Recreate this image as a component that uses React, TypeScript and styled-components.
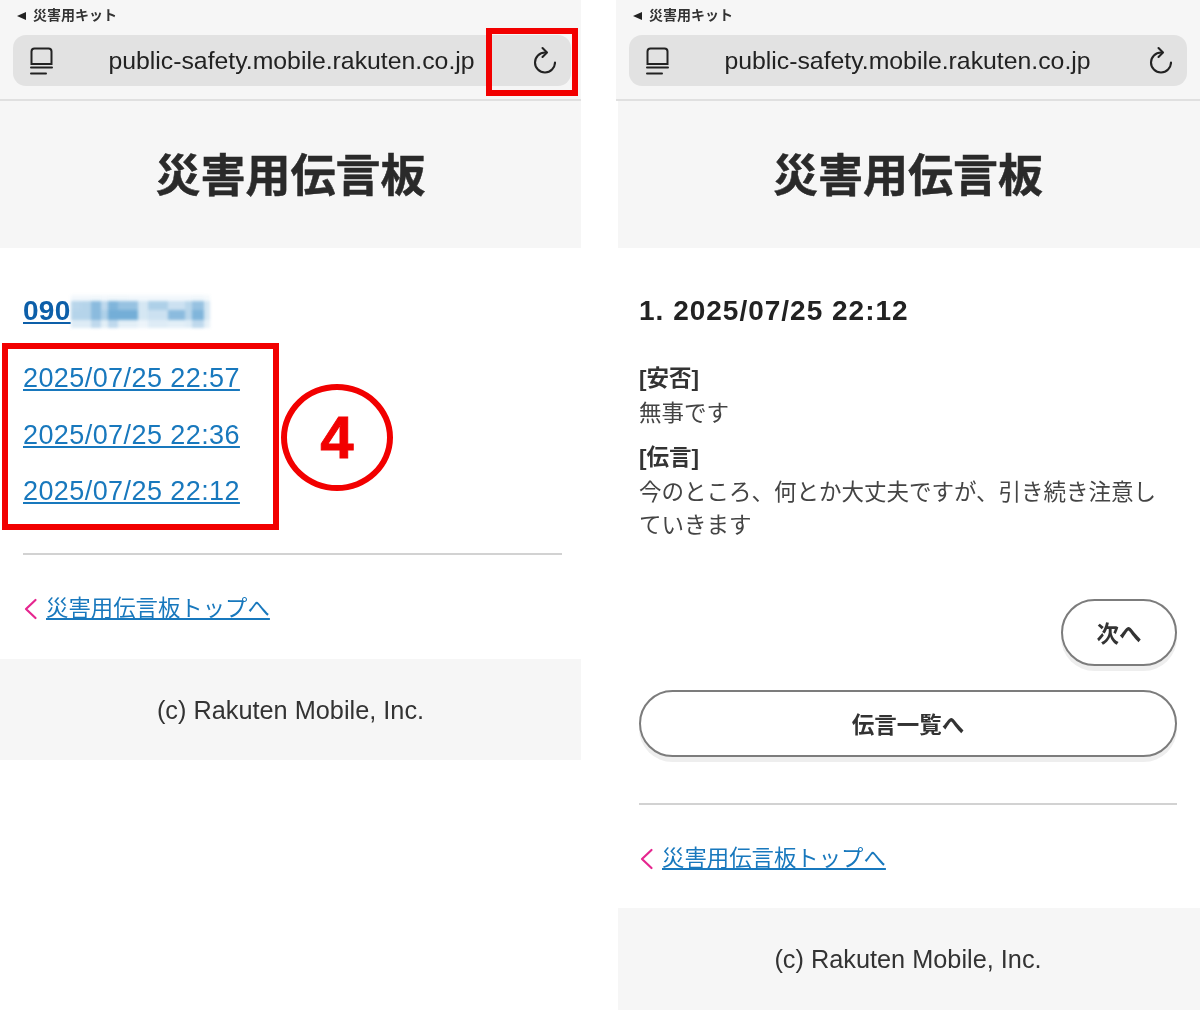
import React from "react";
import styled, { createGlobalStyle } from "styled-components";

const Global = createGlobalStyle`
  html, body { margin: 0; padding: 0; background: #fff; }
  body { font-family: "Liberation Sans", "Noto Sans CJK JP", sans-serif; }
  * { box-sizing: border-box; }
`;

const Page = styled.div`
  width: 1200px;
  height: 1023px;
  display: flex;
  gap: 35px;
  overflow: hidden;
  background: #fff;
  filter: blur(0.4px);
`;

const Phone = styled.section<{ $width: number }>`
  position: relative;
  flex: 0 0 ${(p) => p.$width}px;
  width: ${(p) => p.$width}px;
`;

const Toolbar = styled.div`
  height: 101px;
  padding-top: 6px;
  background: #f6f6f6;
  border-bottom: 2px solid #e0e0e0;
`;

const BackCrumb = styled.div`
  height: 19px;
  margin-left: 17px;
  display: flex;
  align-items: center;
  gap: 7px;
  font-size: 14px;
  line-height: 19px;
  font-weight: 700;
  color: #333;
`;

const CrumbArrow = styled.span`
  width: 0;
  height: 0;
  border-top: 4.5px solid transparent;
  border-bottom: 4.5px solid transparent;
  border-right: 9px solid #222;
`;

const AddressBar = styled.div`
  width: 558px;
  height: 51px;
  margin: 10px 0 0 13px;
  padding: 0 15px 0 14px;
  display: grid;
  grid-template-columns: 1fr auto 1fr;
  align-items: center;
  background: #e2e2e2;
  border-radius: 13px;
`;

const Url = styled.div`
  font-size: 24.8px;
  color: #222;
  white-space: nowrap;
`;

const ReloadWrap = styled.div`
  justify-self: end;
  display: flex;
`;

const Header = styled.header<{ $inset?: number }>`
  height: 147px;
  padding: 4px ${(p) => p.$inset ?? 0}px 0 0;
  margin-left: ${(p) => p.$inset ?? 0}px;
  background: #f6f6f6;
  display: flex;
  align-items: center;
  justify-content: center;
`;

const Title = styled.h1`
  margin: 0;
  font-size: 45px;
  line-height: 54px;
  font-weight: 700;
  color: #2a2a2a;
  -webkit-text-stroke: 0.5px #2a2a2a;
`;

const Main = styled.main<{ $right: number }>`
  padding: 43px ${(p) => p.$right}px 0 23px;
`;

const PhoneLink = styled.div`
  display: flex;
  align-items: center;
  height: 40px;
`;

const PhoneNumber = styled.a`
  font-size: 28px;
  line-height: 34px;
  font-weight: 700;
  color: #0d5fa9;
  text-decoration: underline;
  letter-spacing: 0.3px;
`;

const Mosaic = styled.svg`
  display: block;
  filter: blur(1.8px);
`;

const DateList = styled.div`
  margin-top: 27px;
  display: flex;
  flex-direction: column;
  gap: 16.5px;
`;

const DateLink = styled.a`
  height: 40px;
  font-size: 27px;
  line-height: 40px;
  color: #1878bd;
  text-decoration: underline;
  letter-spacing: 0.42px;
`;

const Rule = styled.hr<{ $top: number }>`
  height: 2px;
  margin: ${(p) => p.$top}px 0 0;
  border: 0;
  background: #d2d2d2;
`;

const BackRow = styled.div<{ $top: number }>`
  margin-top: ${(p) => p.$top}px;
  height: 34px;
  display: flex;
  align-items: center;
  gap: 8px;
`;

const BackLink = styled.a`
  font-size: 22.4px;
  line-height: 34px;
  color: #1878bd;
  text-decoration: underline;
`;

const Footer = styled.footer<{ $top: number; $inset?: number; $height: number }>`
  height: ${(p) => p.$height}px;
  margin-top: ${(p) => p.$top}px;
  margin-left: ${(p) => p.$inset ?? 0}px;
  padding: 2px ${(p) => p.$inset ?? 0}px 0 0;
  background: #f6f6f6;
  display: flex;
  align-items: center;
  justify-content: center;
  font-size: 25.3px;
  color: #333;
`;

const EntryTitle = styled.div`
  height: 40px;
  font-size: 28px;
  line-height: 40px;
  font-weight: 700;
  color: #222;
  letter-spacing: 1px;
`;

const Block = styled.div<{ $top: number }>`
  margin-top: ${(p) => p.$top}px;
`;

const Label = styled.div`
  font-size: 22.5px;
  line-height: 33px;
  font-weight: 700;
  color: #333;
`;

const Body = styled.div`
  padding-top: 1.5px;
  font-size: 22.5px;
  line-height: 33px;
  color: #444;
`;

const ButtonRow = styled.div`
  margin-top: 57px;
  display: flex;
  justify-content: flex-end;
`;

const PillButton = styled.button<{ $wide?: boolean }>`
  display: block;
  width: ${(p) => (p.$wide ? "100%" : "116px")};
  height: 67px;
  margin-top: ${(p) => (p.$wide ? "24px" : "0")};
  padding: 0;
  border: 2px solid #7c7c7c;
  border-radius: 34px;
  background: #fff;
  box-shadow: 0 5px 0 #eeeeee;
  font-family: inherit;
  font-size: 22.5px;
  font-weight: 700;
  color: #333;
`;

const RedBox = styled.div<{ $x: number; $y: number; $w: number; $h: number }>`
  position: absolute;
  left: ${(p) => p.$x}px;
  top: ${(p) => p.$y}px;
  width: ${(p) => p.$w}px;
  height: ${(p) => p.$h}px;
  border: 6px solid #f20000;
`;

const StepCircle = styled.div`
  position: absolute;
  left: 281px;
  top: 384px;
  width: 112px;
  height: 107px;
  display: flex;
  align-items: center;
  justify-content: center;
  border: 6px solid #f20000;
  border-radius: 50%;
  font-size: 60px;
  font-weight: 700;
  color: #f20000;
  -webkit-text-stroke: 0.8px #f20000;
`;

const TabsIcon = () => (
  <svg width="26" height="30" viewBox="0 0 26 30" fill="none" stroke="#222" strokeWidth="2" strokeLinecap="round">
    <path d="M4.5 18V5.5Q4.5 2.5 7.5 2.5H21.5Q24.5 2.5 24.5 5.5V18Z" />
    <path d="M4 21.5H25" />
    <path d="M4 27.5H19" />
  </svg>
);

const ReloadIcon = () => (
  <svg width="24" height="30" viewBox="0 0 24 30" fill="none" stroke="#222" strokeWidth="2.1" strokeLinecap="round" strokeLinejoin="round">
    <path d="M13 6.5A10 10 0 1 0 23 16.5" />
    <path d="M10.5 2L15 6.5L10.5 11" />
  </svg>
);

const Chevron = () => (
  <svg width="15" height="22" viewBox="0 0 15 22" fill="none" stroke="#e5268f" strokeWidth="2.2" strokeLinecap="round" strokeLinejoin="round">
    <path d="M12.5 2L3 11L12.5 20" />
  </svg>
);

const mosaicCols = [10, 10, 10, 7, 10, 10, 10, 10, 10, 10, 7, 10, 7, 12, 6];
const mosaicRows: { h: number; o: number[] }[] = [
  { h: 6, o: [0.05, 0.05, 0.06, 0.05, 0.06, 0.06, 0.05, 0.05, 0.05, 0.05, 0.05, 0.05, 0.05, 0.06, 0.04] },
  { h: 9, o: [0.3, 0.32, 0.5, 0.28, 0.55, 0.45, 0.45, 0.18, 0.35, 0.35, 0.22, 0.22, 0.3, 0.45, 0.18] },
  { h: 10, o: [0.32, 0.32, 0.5, 0.35, 0.6, 0.6, 0.6, 0.18, 0.22, 0.22, 0.5, 0.5, 0.3, 0.55, 0.18] },
  { h: 8, o: [0.14, 0.14, 0.28, 0.12, 0.28, 0.12, 0.12, 0.08, 0.14, 0.14, 0.12, 0.12, 0.14, 0.28, 0.1] },
];

const PhoneMosaic = () => {
  let y = 0;
  return (
    <Mosaic width="139" height="33" viewBox="0 0 139 33">
      {mosaicRows.map((row, r) => {
        let x = 0;
        const top = y;
        y += row.h;
        return row.o.map((o, c) => {
          const w = mosaicCols[c];
          const rect = <rect key={`${r}-${c}`} x={x} y={top} width={w} height={row.h} fill="#1878bd" opacity={o} />;
          x += w;
          return rect;
        });
      })}
    </Mosaic>
  );
};

const BrowserChrome = () => (
  <Toolbar>
    <BackCrumb>
      <CrumbArrow />
      災害用キット
    </BackCrumb>
    <AddressBar>
      <TabsIcon />
      <Url>public-safety.mobile.rakuten.co.jp</Url>
      <ReloadWrap>
        <ReloadIcon />
      </ReloadWrap>
    </AddressBar>
  </Toolbar>
);

const dates = ["2025/07/25 22:57", "2025/07/25 22:36", "2025/07/25 22:12"];

export default function App() {
  return (
    <Page>
      <Global />
      <Phone $width={581}>
        <BrowserChrome />
        <Header>
          <Title>災害用伝言板</Title>
        </Header>
        <Main $right={19}>
          <PhoneLink>
            <PhoneNumber>090</PhoneNumber>
            <PhoneMosaic />
          </PhoneLink>
          <DateList>
            {dates.map((d) => (
              <DateLink key={d}>{d}</DateLink>
            ))}
          </DateList>
          <Rule $top={42} />
          <BackRow $top={37}>
            <Chevron />
            <BackLink>災害用伝言板トップへ</BackLink>
          </BackRow>
        </Main>
        <Footer $top={33} $height={101}>(c) Rakuten Mobile, Inc.</Footer>
        <RedBox $x={486} $y={28} $w={92} $h={68} />
        <RedBox $x={2} $y={343} $w={277} $h={187} />
        <StepCircle>4</StepCircle>
      </Phone>
      <Phone $width={584}>
        <BrowserChrome />
        <Header $inset={2}>
          <Title>災害用伝言板</Title>
        </Header>
        <Main $right={23}>
          <EntryTitle>1. 2025/07/25 22:12</EntryTitle>
          <Block $top={31}>
            <Label>[安否]</Label>
            <Body>無事です</Body>
          </Block>
          <Block $top={11.5}>
            <Label>[伝言]</Label>
            <Body>今のところ、何とか大丈夫ですが、引き続き注意していきます</Body>
          </Block>
          <ButtonRow>
            <PillButton>次へ</PillButton>
          </ButtonRow>
          <PillButton $wide>伝言一覧へ</PillButton>
          <Rule $top={46} />
          <BackRow $top={37}>
            <Chevron />
            <BackLink>災害用伝言板トップへ</BackLink>
          </BackRow>
        </Main>
        <Footer $top={32} $inset={2} $height={102}>(c) Rakuten Mobile, Inc.</Footer>
      </Phone>
    </Page>
  );
}
